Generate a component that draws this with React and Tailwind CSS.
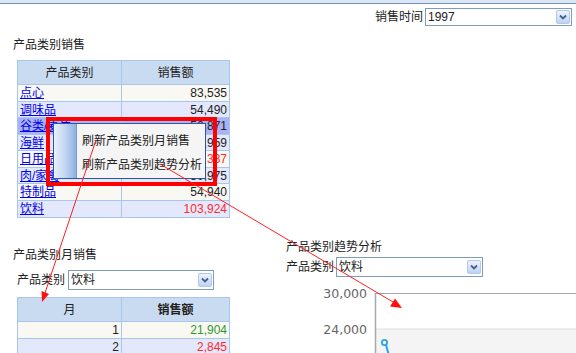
import React from 'react';

const salesRows = [
  { name: '点心', value: '83,535', bg: 'bg-[#f9f8f3]' },
  { name: '调味品', value: '54,490', bg: 'bg-[#e3e8fc]' },
  { name: '谷类/麦片', value: '56,871', bg: 'bg-[#a9b1f7]' },
  { name: '海鲜', value: '66,959', bg: 'bg-[#e3e8fc]' },
  { name: '日用品', value: '115,387', bg: 'bg-[#f9f8f3]', red: true },
  { name: '肉/家禽', value: '80,975', bg: 'bg-[#e3e8fc]' },
  { name: '特制品', value: '54,940', bg: 'bg-[#f9f8f3]' },
  { name: '饮料', value: '103,924', bg: 'bg-[#e3e8fc]', red: true },
];

const monthRows = [
  { name: '1', value: '21,904', bg: 'bg-[#f9f8f3]', color: 'text-[#2f9a2f]' },
  { name: '2', value: '2,845', bg: 'bg-[#e3e8fc]', color: 'text-[#ff2a2a]' },
];

const DropButton = () => (
  <div className="w-[14px] h-[14px] mr-[1px] rounded-[2px] border border-[#b4c9ea] bg-gradient-to-b from-[#eef4fe] to-[#bcd2f4] flex items-center justify-center">
    <svg width="8" height="6" viewBox="0 0 8 6">
      <path d="M1 1.5 L4 4.5 L7 1.5" fill="none" stroke="#4a5f86" strokeWidth="1.8" />
    </svg>
  </div>
);

const Select = ({ value, className }) => (
  <div className={`flex items-center justify-between border border-[#7f9db9] bg-white ${className}`}>
    <span className="pl-[2px] leading-[14px]">{value}</span>
    <DropButton />
  </div>
);

const DataTable = ({ col1, col2, col2Bold, rows, link, className }) => (
  <div className={`w-[213px] border border-[#a6c6ec] ${className}`}>
    <div className="grid grid-cols-[104px_1fr] h-[24px] bg-[#c9dbf0] border-b border-[#a6c6ec]">
      <div className="flex items-center justify-center border-r border-[#a6c6ec]">{col1}</div>
      <div className={`flex items-center justify-center ${col2Bold ? 'font-bold' : ''}`}>{col2}</div>
    </div>
    {rows.map((row, i) => (
      <div
        key={row.name}
        className={`grid grid-cols-[104px_1fr] h-[16.5px] ${row.bg} ${i < rows.length - 1 ? 'border-b border-[#a6c6ec]' : ''}`}
      >
        <div className={`border-r border-[#a6c6ec] leading-[16px] ${link ? 'pl-[2px]' : 'text-right pr-[2px]'}`}>
          {link ? <span className="text-[#0000ee] underline">{row.name}</span> : row.name}
        </div>
        <div className={`text-right pr-[2px] leading-[16px] ${row.color || (row.red ? 'text-[#ff2a2a]' : '')}`}>
          {row.value}
        </div>
      </div>
    ))}
  </div>
);

export default function App() {
  return (
    <div className="relative w-[576px] h-[353px] overflow-hidden bg-white text-[12px] text-[#222] font-['Liberation_Sans','Noto_Sans_CJK_SC',sans-serif]">
      <div className="h-[4px] bg-[#dbe7f5] border-b border-[#7590b4]" />

      <div className="flex justify-end items-center mt-[4px] pr-[4px]">
        <span className="mr-[2px]">销售时间</span>
        <Select value="1997" className="w-[147px] h-[18px]" />
      </div>

      <div className="flex">
        <div className="w-[286px] pl-[13px]">
          <div className="mt-[11px] leading-[16px]">产品类别销售</div>
          <DataTable className="ml-[4px] mt-[7px]" col1="产品类别" col2="销售额" rows={salesRows} link />

          <div className="mt-[29px] leading-[16px]">产品类别月销售</div>
          <div className="flex items-center mt-[7px] ml-[4px]">
            <span className="mr-[3px]">产品类别</span>
            <Select value="饮料" className="w-[146px] h-[20px]" />
          </div>
          <DataTable className="ml-[4px] mt-[7px]" col1="月" col2="销售额" col2Bold rows={monthRows} />
        </div>

        <div className="flex-1 pt-[213px]">
          <div className="leading-[16px]">产品类别趋势分析</div>
          <div className="flex items-center mt-[2px]">
            <span className="mr-[2px]">产品类别</span>
            <Select value="饮料" className="w-[147px] h-[20px]" />
          </div>
          <svg width="290" height="76" className="mt-[6px] block">
            <rect x="89" y="46" width="210" height="40" fill="#f4f4f4" />
            <line x1="89" y1="46" x2="290" y2="46" stroke="#dedede" strokeWidth="1" />
            <line x1="89" y1="10.5" x2="290" y2="10.5" stroke="#a8a8a8" strokeWidth="1" />
            <line x1="89.5" y1="10" x2="89.5" y2="76" stroke="#a8a8a8" strokeWidth="1.5" />
            <text x="81" y="14.5" textAnchor="end" fill="#666" fontSize="12.5" fontFamily="DejaVu Sans, sans-serif">30,000</text>
            <text x="81" y="50.5" textAnchor="end" fill="#666" fontSize="12.5" fontFamily="DejaVu Sans, sans-serif">24,000</text>
            <line x1="100" y1="62" x2="104" y2="76" stroke="#2aa3e6" strokeWidth="2" />
            <circle cx="98.5" cy="59.5" r="2.6" fill="#fff" stroke="#2aa3e6" strokeWidth="1.8" />
          </svg>
        </div>
      </div>

      {/* context menu */}
      <div className="absolute left-[53px] top-[123px] w-[153px] h-[56px] flex border border-[#2c56a6] bg-[#f5f5f5]">
        <div className="w-[23px] bg-gradient-to-r from-[#e9f1fc] via-[#c2d6f2] to-[#8fb0e2] border-r border-[#7a9ad0]" />
        <div className="pt-[5px] pl-[5px]">
          <div className="h-[24px] leading-[24px]">刷新产品类别月销售</div>
          <div className="h-[24px] leading-[24px]">刷新产品类别趋势分析</div>
        </div>
      </div>

      {/* annotation frame */}
      <div className="absolute left-[46px] top-[117px] w-[171px] h-[69px] border-4 border-[#ff0000]" />

      {/* annotation arrows */}
      <svg className="absolute left-0 top-0 pointer-events-none" width="576" height="353">
        <line x1="96" y1="140" x2="45" y2="293" stroke="#ff2020" strokeWidth="1" />
        <polygon points="42,302 49,294 41.5,291" fill="#ff1010" />
        <line x1="160" y1="164" x2="393" y2="302" stroke="#ff2020" strokeWidth="1" />
        <polygon points="402,308 390,306.5 395,298.5" fill="#ff1010" />
      </svg>
    </div>
  );
}
